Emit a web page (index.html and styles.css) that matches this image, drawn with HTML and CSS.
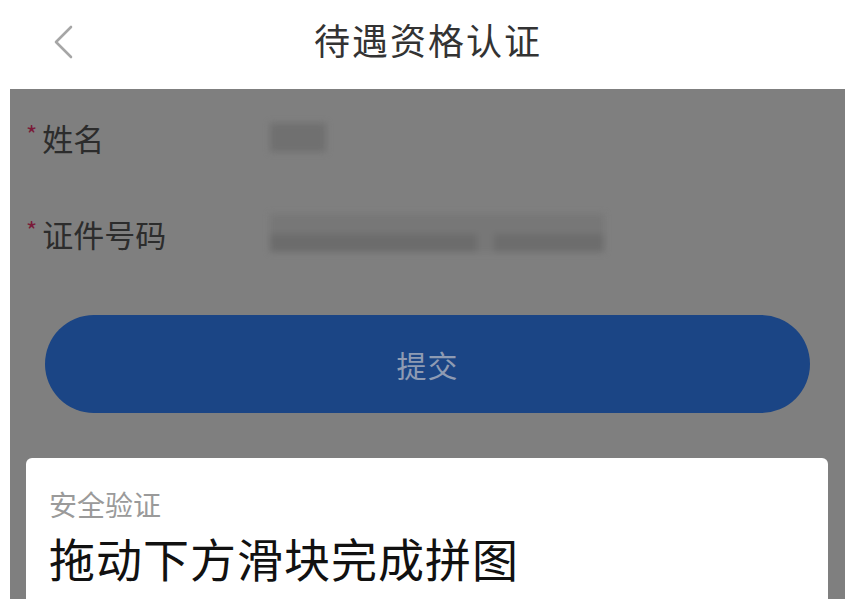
FILE: index.html
```html
<!DOCTYPE html>
<html lang="zh-CN">
<head>
  <meta charset="UTF-8" />
  <meta name="viewport" content="width=device-width, initial-scale=1.0" />
  <title>待遇资格认证</title>
  <link rel="stylesheet" href="styles.css">
</head>
<body>
  <div class="header">
    <a class="back" href="#">
      <svg width="24" height="36" viewBox="0 0 24 36">
        <path d="M19 3 L4 18 L19 33" fill="none" stroke="#a6a6a6" stroke-width="2.6" stroke-linecap="round" stroke-linejoin="round" />
      </svg>
    </a>
    <h1 class="title">待遇资格认证</h1>
  </div>

  <div class="mask">
    <div class="form-row">
      <label class="label"><span class="required">*</span>姓名</label>
      <div class="value blur-name"></div>
    </div>
    <div class="form-row">
      <label class="label"><span class="required">*</span>证件号码</label>
      <div class="value blur-id">
        <span class="blur-id-bottom"></span>
      </div>
    </div>

    <button class="submit">提交</button>

    <div class="dialog">
      <div class="dialog-sub">安全验证</div>
      <div class="dialog-title">拖动下方滑块完成拼图</div>
    </div>
  </div>
</body>
</html>
```

FILE: styles.css
```css
body {
  margin: 0;
  height: 599px;
  overflow: hidden;
  background: #fff;
  font-family: "Noto Sans CJK SC", "Noto Sans", sans-serif;
  display: flex;
  flex-direction: column;
}
.header {
  height: 89px;
  position: relative;
  display: flex;
  justify-content: center;
  align-items: flex-start;
  flex-shrink: 0;
}
.back {
  position: absolute;
  left: 52px;
  top: 24px;
  display: block;
}
.title {
  margin: 13px 4px 0 0;
  font-size: 36px;
  line-height: 52px;
  font-weight: 400;
  color: #333;
  letter-spacing: 2px;
}
.mask {
  flex: 1;
  margin: 0 15px 0 10px;
  background: #7f7f7f;
  overflow: hidden;
}
.form-row {
  height: 96px;
  display: flex;
  align-items: center;
  padding-left: 16px;
}
.label {
  width: 244px;
  font-size: 31px;
  color: #2c2c2c;
  display: flex;
  align-items: center;
}
.required {
  color: #7a1a38;
  font-size: 24px;
  margin-right: 5px;
  position: relative;
  top: -4px;
}
.value {
  background: #707070;
  filter: blur(3px);
}
.blur-name {
  width: 56px;
  height: 29px;
}
.blur-id {
  width: 334px;
  height: 38px;
  background: #777;
  display: flex;
  flex-direction: column;
  justify-content: flex-end;
}
.blur-id-bottom {
  height: 18px;
  background: linear-gradient(90deg, #6c6c6c 0 62%, #777 62% 67%, #6d6d6d 67% 100%);
}
.submit {
  display: block;
  width: calc(100% - 70px);
  height: 98px;
  margin: 34px 35px 0;
  border: none;
  border-radius: 49px;
  background: #1b4585;
  color: #8e9bb3;
  font-family: inherit;
  font-size: 30px;
  letter-spacing: 1px;
}
.dialog {
  margin: 45px 17px 0 16px;
  background: #fff;
  border-radius: 6px 6px 0 0;
  padding: 28px 24px 0 23px;
  height: 200px;
}
.dialog-sub {
  font-size: 28px;
  line-height: 36px;
  color: #9a9a9a;
}
.dialog-title {
  margin-top: 7px;
  font-size: 46px;
  line-height: 56px;
  letter-spacing: 1px;
  color: #111;
}
```
